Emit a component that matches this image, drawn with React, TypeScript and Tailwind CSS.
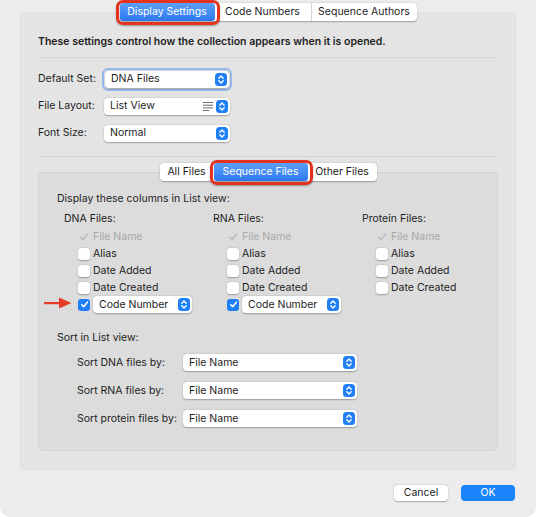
import React from 'react';

const font = { fontFamily: 'Inter, "Noto Sans", sans-serif' };

function Stepper() {
  return (
    <span className="flex h-[13px] w-[12px] items-center justify-center rounded-[3.5px] bg-[#1f7ff6]">
      <svg width="8" height="11" viewBox="0 0 8 11" fill="none" stroke="white" strokeWidth="1.4" strokeLinecap="round" strokeLinejoin="round">
        <path d="M1.8 4.2 L4 2 L6.2 4.2" />
        <path d="M1.8 6.8 L4 9 L6.2 6.8" />
      </svg>
    </span>
  );
}

function LinesGlyph() {
  return (
    <svg width="10" height="9" viewBox="0 0 10 9" stroke="#6b6b6b" strokeWidth="1">
      <path d="M0 0.5 H10" />
      <path d="M0 3.2 H10" />
      <path d="M0 5.9 H10" />
      <path d="M0 8.5 H6" />
    </svg>
  );
}

function Popup({ value, width, lines = false }: { value: string; width: number; lines?: boolean }) {
  return (
    <div
      className="flex h-[17px] shrink-0 items-center justify-between rounded-[4px] bg-white pl-[6px] pr-[2px] shadow-[0_0.5px_1.5px_rgba(0,0,0,0.3)]"
      style={{ width }}
    >
      <span className="text-[10.5px] text-[#1d1d1d]">{value}</span>
      <span className="flex items-center gap-[3px]">
        {lines && <LinesGlyph />}
        <Stepper />
      </span>
    </div>
  );
}

function Check({ on, muted }: { on?: boolean; muted?: boolean }) {
  if (muted) {
    return (
      <span className="flex h-[12px] w-[12px] items-center justify-center">
        <svg width="10" height="10" viewBox="0 0 10 10" fill="none" stroke="#b9b9b9" strokeWidth="1.5" strokeLinecap="round" strokeLinejoin="round">
          <path d="M1.8 5.3 L4 7.6 L8.4 2.2" />
        </svg>
      </span>
    );
  }
  return (
    <span
      className={`flex h-[12px] w-[12px] items-center justify-center rounded-[3px] ${
        on ? 'bg-[#1f7ff6]' : 'bg-white shadow-[0_0.5px_1.5px_rgba(0,0,0,0.3)]'
      }`}
    >
      {on && (
        <svg width="9" height="9" viewBox="0 0 10 10" fill="none" stroke="white" strokeWidth="1.7" strokeLinecap="round" strokeLinejoin="round">
          <path d="M2 5.3 L4.1 7.5 L8.2 2.4" />
        </svg>
      )}
    </span>
  );
}

function Tabs({ items, active, widths }: { items: string[]; active: number; widths: number[] }) {
  return (
    <div className="relative z-10 flex justify-center">
      <div className="flex h-[18px] rounded-[4px] bg-white shadow-[0_0.5px_1.5px_rgba(0,0,0,0.3)]">
        {items.map((t, i) => (
          <div
            key={t}
            style={{ width: widths[i] }}
            className={`relative flex items-center justify-center text-[10.5px] ${
              i === active
                ? 'rounded-[3px] bg-gradient-to-b from-[#5b9ff9] to-[#2d78f0] text-white'
                : 'text-[#1d1d1d]'
            } ${i > 0 && i !== active && i - 1 !== active ? 'border-l border-[#d6d6d6]' : ''}`}
          >
            {t}
            {i === active && (
              <span className="pointer-events-none absolute -bottom-[4px] -left-[4px] -right-[5px] -top-[3px] rounded-[7px] border-[3px] border-[#e3321f] shadow-[0_1px_2px_rgba(0,0,0,0.35)]" />
            )}
          </div>
        ))}
      </div>
    </div>
  );
}

function FileColumn({ title, coded }: { title: string; coded: boolean }) {
  return (
    <div className="w-[149px] shrink-0">
      <div className="h-[16px] leading-[16px]">{title}</div>
      <div className="mt-[1px] pl-[14px]">
        <div className="flex h-[17px] items-center gap-[3px] text-[#a9a9a9]">
          <Check muted />
          File Name
        </div>
        {['Alias', 'Date Added', 'Date Created'].map((r) => (
          <div key={r} className="flex h-[17px] items-center gap-[3px]">
            <Check />
            {r}
          </div>
        ))}
        {coded && (
          <div className="flex h-[17px] items-center gap-[3px]">
            <Check on />
            <Popup value="Code Number" width={99} />
          </div>
        )}
      </div>
    </div>
  );
}

function Arrow() {
  return (
    <svg width="28" height="12" viewBox="0 0 28 12" className="absolute left-[-13px] top-[86px]">
      <path d="M0 5 L17 5 L17 7.2 L0 7.2 Z" fill="#e63b25" />
      <path d="M15 0.5 L27.5 6 L15 11.5 Z" fill="#e63b25" />
    </svg>
  );
}

export default function App() {
  const sortRows = ['Sort DNA files by:', 'Sort RNA files by:', 'Sort protein files by:'];
  return (
    <div className="h-[517px] w-[536px] bg-white text-[10.5px] text-[#1d1d1d]" style={font}>
      <div className="flex h-full flex-col rounded-b-[10px] bg-[#ececec] px-[20px] pt-[3px]">
        <Tabs items={['Display Settings', 'Code Numbers', 'Sequence Authors']} active={0} widths={[95, 96, 106]} />

        <div className="-mt-[9px] h-[458px] rounded-[5px] border border-[#dedede] bg-[#e4e4e4] px-[17px] pt-[21px]">
          <div className="h-[16px] font-semibold leading-[16px]">
            These settings control how the collection appears when it is opened.
          </div>
          <div className="mt-[7px] h-px bg-[#d6d6d6]" />

          <div className="mt-[11px] flex flex-col gap-[7px]">
            <div className="flex h-[20px] items-center">
              <span className="w-[64px]">Default Set:</span>
              <div className="rounded-[6px] border-[2px] border-[#93b9ec] p-px">
                <Popup value="DNA Files" width={124} />
              </div>
            </div>
            <div className="flex h-[20px] items-center">
              <span className="w-[66px]">File Layout:</span>
              <Popup value="List View" width={126} lines />
            </div>
            <div className="flex h-[20px] items-center">
              <span className="w-[66px]">Font Size:</span>
              <Popup value="Normal" width={126} />
            </div>
          </div>

          <div className="mt-[13px] h-px bg-[#d6d6d6]" />

          <div className="mt-[6px]">
            <Tabs items={['All Files', 'Sequence Files', 'Other Files']} active={1} widths={[54, 94, 69]} />
          </div>

          <div className="relative -mt-[9px] h-[279px] rounded-[5px] border border-[#d4d4d4] bg-[#dcdcdc] pl-[18px] pt-[18px]">
            <div className="h-[16px] leading-[16px]">Display these columns in List view:</div>
            <div className="relative mt-[4px] flex pl-[7px]">
              <Arrow />
              <FileColumn title="DNA Files:" coded />
              <FileColumn title="RNA Files:" coded />
              <FileColumn title="Protein Files:" coded={false} />
            </div>

            <div className="mt-[17px] h-[16px] leading-[16px]">Sort in List view:</div>
            <div className="mt-[8px] flex flex-col gap-[11px] pl-[20px]">
              {sortRows.map((r) => (
                <div key={r} className="flex h-[17px] items-center">
                  <span className="w-[106px]">{r}</span>
                  <Popup value="File Name" width={174} />
                </div>
              ))}
            </div>
          </div>
        </div>

        <div className="mt-[15px] flex justify-end gap-[13px] pr-px">
          <button className="h-[16px] w-[54px] rounded-[4px] bg-white text-[10.5px] shadow-[0_0.5px_1.5px_rgba(0,0,0,0.3)]">
            Cancel
          </button>
          <button className="h-[16px] w-[54px] rounded-[4px] bg-[#1a84fb] text-[10.5px] text-white">OK</button>
        </div>
      </div>
    </div>
  );
}
